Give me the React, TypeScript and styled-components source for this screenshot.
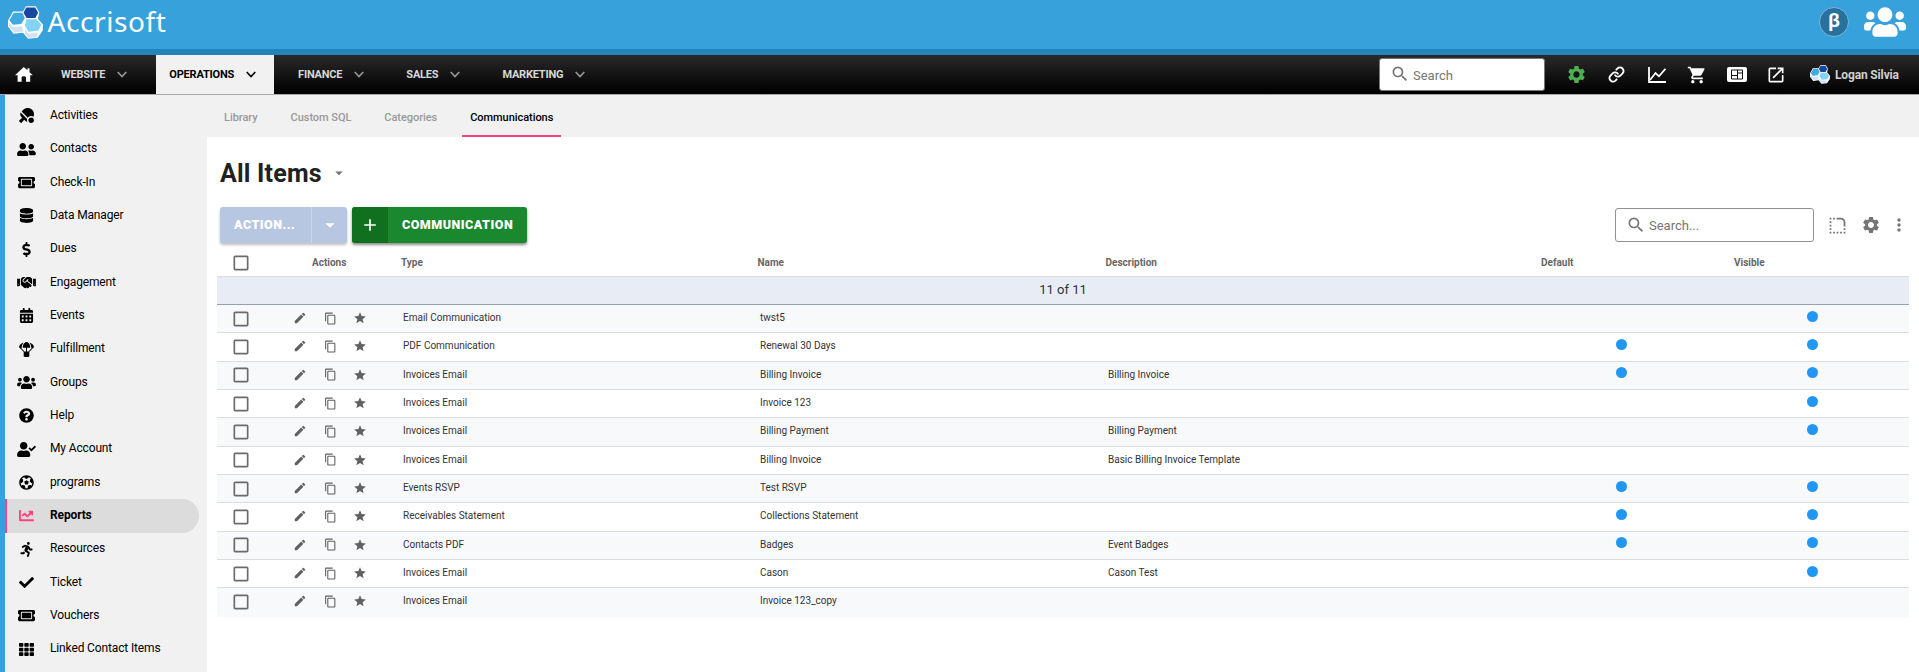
import React from "react";
import styled, { createGlobalStyle, css } from "styled-components";
import type { IconType } from "react-icons";
import {
  FaTableTennis, FaUserFriends, FaTicketAlt, FaDatabase, FaDollarSign, FaHandshake,
  FaCalendarAlt, FaParachuteBox, FaUsers, FaQuestionCircle, FaUserCheck, FaFutbol,
  FaChartLine, FaRunning, FaCheck, FaTh,
} from "react-icons/fa";
import {
  MdSearch, MdSettings, MdShoppingCart, MdOpenInNew, MdEdit, MdContentCopy, MdStar,
  MdCheckBoxOutlineBlank, MdMoreVert, MdRoundedCorner, MdArrowDropDown, MdAdd,
} from "react-icons/md";
import { Link as LinkIcon } from "lucide-react";

const Global = createGlobalStyle`
  * { box-sizing: border-box; }
  html, body { margin: 0; padding: 0; background: #fff; }
  body { font-family: Roboto, sans-serif; overflow: hidden; }
  svg { display: block; flex: none; }
`;

const Page = styled.div`
  display: flex;
  flex-direction: column;
  height: 672px;
  overflow: hidden;
`;

const Brand = styled.header`
  display: flex;
  justify-content: space-between;
  height: 55px;
  padding: 0 13px 0 8px;
  background: #37a1dc;
  border-bottom: 6px solid #2384bc;
`;

const Logo = styled.div`
  display: flex;
  align-items: flex-start;
  padding-top: 6px;
  color: #fff;
`;

const Wordmark = styled.span`
  margin: -3px 0 0 4.500px;
  font: 400 28px/36px "Noto Sans", sans-serif;
  letter-spacing: 0.6px;
`;

const BrandTools = styled.div`
  display: flex;
  align-items: center;
  gap: 15px;
  height: 44px;
  color: #fff;
`;

const Beta = styled.span`
  width: 30px;
  height: 30px;
  border: 1px solid #7fb4d4;
  border-radius: 50%;
  background: #26719d;
  font: 700 18px/25px "Open Sans", sans-serif;
  text-align: center;
`;

const PeopleIcon = styled(FaUsers)`
  width: 42px;
  height: 34px;
`;

const Nav = styled.nav`
  display: flex;
  align-items: center;
  height: 40px;
  border-bottom: 1px solid #a8a8a8;
  background: linear-gradient(#2a2a2a, #000 95%);
  color: #fff;
`;

const HomeLink = styled.a`
  display: flex;
  width: 48px;
  padding-left: 15px;
`;

const NavItem = styled.a<{ $active?: boolean }>`
  display: flex;
  align-items: center;
  align-self: stretch;
  gap: 12px;
  margin-right: 11px;
  padding: 0 18px 0 13px;
  color: ${(p) => (p.$active ? "#000" : "#d8d8d8")};
  background: ${(p) => (p.$active ? "#f1f1f1" : "transparent")};
  font-size: 11px;
  font-weight: 700;
  letter-spacing: -0.2px;
  svg { color: ${(p) => (p.$active ? "#000" : "#999")}; }
`;

const SearchField = styled.div<{ $table?: boolean }>`
  display: flex;
  flex: none;
  align-items: center;
  gap: 3px;
  width: ${(p) => (p.$table ? 199 : 166)}px;
  height: ${(p) => (p.$table ? 34 : 33)}px;
  padding: 1px 10px 0;
  border: 1px solid ${(p) => (p.$table ? "#919191" : "#777")};
  border-radius: 3px;
  background: #fff;
  color: #757575;
  font-size: 13px;
  svg { margin-top: -2px; }
`;

const NavTools = styled.div`
  display: flex;
  align-items: center;
  margin-left: auto;
`;

const ToolSlot = styled.span<{ $w: number; $color?: string }>`
  display: flex;
  flex: none;
  justify-content: center;
  width: ${(p) => p.$w}px;
  color: ${(p) => p.$color ?? "#fff"};
`;

const User = styled.span`
  display: flex;
  flex: none;
  align-items: center;
  gap: 5px;
  width: 109px;
  margin-left: 27px;
  color: #d0d0d0;
  font-size: 12px;
  font-weight: 700;
  letter-spacing: -0.15px;
  white-space: nowrap;
`;

const Body = styled.div`
  display: flex;
  flex: 1;
  min-height: 0;
`;

const Sidebar = styled.aside`
  width: 207px;
  padding-top: 4.3px;
  border-left: 5px solid #37a1dc;
  background: #f1f1f1;
`;

const SideItem = styled.a<{ $active?: boolean }>`
  display: flex;
  align-items: center;
  width: 194px;
  height: 33.33px;
  color: #000;
  font-size: 12px;
  letter-spacing: -0.14px;
  ${(p) => p.$active && css`
    border-radius: 0 17px 17px 0;
    background: #dcdcdc;
    box-shadow: inset 2px 0 #ff4081;
    font-weight: 700;
    svg { color: #ff4081; }
  `}
`;

const SideIcon = styled.span`
  display: flex;
  justify-content: center;
  width: 43px;
  margin-right: 2px;
  svg { width: 19px; height: 15px; }
`;

const SideLabel = styled.span`
  padding-bottom: 2px;
`;

const Main = styled.main`
  flex: 1;
  min-width: 0;
`;

const Tabs = styled.div`
  display: flex;
  height: 42px;
  padding-left: 9px;
  background: #f1f1f1;
`;

const Tab = styled.a<{ $active?: boolean }>`
  padding: 0 8px;
  margin-right: 17px;
  border-bottom: 2px solid ${(p) => (p.$active ? "#ff4081" : "transparent")};
  color: ${(p) => (p.$active ? "#000" : "#999")};
  font-size: 11px;
  font-weight: 500;
  letter-spacing: -0.05px;
  line-height: 45px;
`;

const Title = styled.h1`
  display: flex;
  align-items: center;
  gap: 8px;
  height: 70px;
  margin: 0;
  padding: 2px 0 0 13px;
  color: #212121;
  font-size: 25px;
  font-weight: 700;
  letter-spacing: 0.2px;
  svg { color: #757575; }
`;

const Toolbar = styled.div`
  display: flex;
  align-items: center;
  height: 36px;
  padding: 0 10px 0 13px;
`;

const Button = styled.button<{ $green?: boolean }>`
  display: flex;
  height: 36px;
  margin: 0 5px 0 0;
  padding: 0;
  overflow: hidden;
  border: 0;
  border-radius: 3px;
  background: ${(p) => (p.$green ? "#19882f" : "#b7c7e2")};
  box-shadow: 0 2px 3px rgba(0, 0, 0, ${(p) => (p.$green ? 0.45 : 0.25)});
  color: #fff;
  font: 900 12.5px/36px Roboto, sans-serif;
  letter-spacing: 0.5px;
`;

const ButtonIcon = styled.span<{ $side: "left" | "right" }>`
  display: flex;
  align-items: center;
  justify-content: center;
  width: 36px;
  background: ${(p) => (p.$side === "left" ? "#11701f" : "transparent")};
  border-left: ${(p) => (p.$side === "right" ? "1px solid #c8d5ea" : "0")};
`;

const ButtonText = styled.span<{ $w: number }>`
  width: ${(p) => p.$w}px;
  padding-left: 14px;
  text-align: left;
`;

const TableTools = styled.div`
  display: flex;
  align-items: center;
  margin-left: auto;
  color: #757575;
`;

const Grid = styled.div`
  margin: 0 10px;
`;

const columns = css`
  display: grid;
  grid-template-columns: 64px 118px 357px 348px 437px 193px 1fr;
  align-items: center;
`;

const HeadRow = styled.div`
  ${columns}
  height: 34px;
  border-bottom: 1px solid #dadada;
  color: #666;
  font-size: 10px;
  font-weight: 700;
  padding-top: 6px;
`;

const HeadCell = styled.span<{ $x: number }>`
  padding: 0 0 1px ${(p) => p.$x}px;
`;

const GroupRow = styled.div`
  height: 28px;
  border-bottom: 1px solid #9aa0a8;
  background: #e8edf5;
  color: #333;
  font-size: 13px;
  line-height: 25px;
  text-align: center;
`;

const Row = styled.div<{ $odd: boolean }>`
  ${columns}
  height: 28.33px;
  border-bottom: 1px solid #dcdcdc;
  background: ${(p) => (p.$odd ? "#f8f9fb" : "#fff")};
  color: #333;
  font-size: 10px;
  &:last-child { border-bottom-color: transparent; }
`;

const Check = styled(MdCheckBoxOutlineBlank)`
  margin-left: 14px;
  color: #6b6b6b;
`;

const Actions = styled.span`
  display: flex;
  align-items: center;
  gap: 16.500px;
  padding: 0 0 1px 12px;
  color: #616161;
`;

const Cell = styled.span`
  padding: 0 0 2px 4px;
`;

const DotCell = styled.span<{ $x: number }>`
  padding: 0 0 5px ${(p) => p.$x}px;
`;

const Dot = styled.i`
  display: block;
  width: 11px;
  height: 11px;
  border-radius: 50%;
  background: #2196f3;
`;

const Hexes = ({ width, height }: { width: number; height: number }) => (
  <svg width={width} height={height} viewBox="0 0 35 33">
    <path d="m0 14.500 5-9h10L18 .3h9.800L31.300 6.500l-1.300 6.500 5 5.500-.3 6L29.700 31.700 20 32.700l-5-6L5.500 27.700 0 20.500z" fill="#fff" />
    <path d="M5.700 6.800h8.600l2.500 5.200-3.600 6-8.400.8-3.400-4.500z" fill="#3fa9e2" />
    <path d="M18.300 1.500h8.900l2.900 5.200-2.800 5.300h-8.700L15.500 6.700z" fill="#17479e" />
    <path d="M18.500 13.300h9.800l5.200 5.200-3.300 6.200-9.700 1-3.700-6.200z" fill="#82d3f7" />
    <path d="m1 16.500 4 4.500 9-.8 1.500 5.300-9.500 1L1 20.300zM17 23l3.500 4.500 9-1L29 31l-8.600.9-3.400-4.400z" fill="#d3e2f3" />
  </svg>
);

const HomeIcon = () => (
  <svg width="18" height="15" viewBox="0 0 18 15" fill="currentColor">
    <path d="M8.800 0 12.500 3.300V1.200h2v4L17.800 8.200H15.200V14.700H11V10.500Q11 9.200 8.800 9.200T6.600 10.500V14.700H2.600V8.200H0z" />
  </svg>
);

const Chevron = () => (
  <svg width="10" height="7" viewBox="0 0 10 7" fill="none" stroke="currentColor" strokeWidth="1.600">
    <path d="m.7 1 4.300 4.500L9.300 1" />
  </svg>
);

const TrendIcon = () => (
  <svg width="18" height="16" viewBox="0 0 18 16" fill="none" stroke="currentColor" strokeWidth="1.800">
    <path d="M1 0v15h17M2 13l5.500-7 3.500 3.300 6.500-7.500" />
  </svg>
);

const BoardIcon = () => (
  <svg width="20" height="15" viewBox="0 0 20 15">
    <rect width="20" height="15" rx="2" fill="currentColor" />
    <path d="M4.500 3h11v9h-11zM10.500 3v9M4.500 8.500h6M10.500 6h5" fill="none" stroke="#111" />
  </svg>
);

const navItems = ["WEBSITE", "OPERATIONS", "FINANCE", "SALES", "MARKETING"];

const sideItems: [string, IconType][] = [
  ["Activities", FaTableTennis],
  ["Contacts", FaUserFriends],
  ["Check-In", FaTicketAlt],
  ["Data Manager", FaDatabase],
  ["Dues", FaDollarSign],
  ["Engagement", FaHandshake],
  ["Events", FaCalendarAlt],
  ["Fulfillment", FaParachuteBox],
  ["Groups", FaUsers],
  ["Help", FaQuestionCircle],
  ["My Account", FaUserCheck],
  ["programs", FaFutbol],
  ["Reports", FaChartLine],
  ["Resources", FaRunning],
  ["Ticket", FaCheck],
  ["Vouchers", FaTicketAlt],
  ["Linked Contact Items", FaTh],
];

const tabs = ["Library", "Custom SQL", "Categories", "Communications"];

type Item = [type: string, name: string, description: string, isDefault: boolean, visible: boolean];

const items: Item[] = [
  ["Email Communication", "twst5", "", false, true],
  ["PDF Communication", "Renewal 30 Days", "", true, true],
  ["Invoices Email", "Billing Invoice", "Billing Invoice", true, true],
  ["Invoices Email", "Invoice 123", "", false, true],
  ["Invoices Email", "Billing Payment", "Billing Payment", false, true],
  ["Invoices Email", "Billing Invoice", "Basic Billing Invoice Template", false, false],
  ["Events RSVP", "Test RSVP", "", true, true],
  ["Receivables Statement", "Collections Statement", "", true, true],
  ["Contacts PDF", "Badges", "Event Badges", true, true],
  ["Invoices Email", "Cason", "Cason Test", false, true],
  ["Invoices Email", "Invoice 123_copy", "", false, false],
];

export default function App() {
  return (
    <Page>
      <Global />
      <Brand>
        <Logo>
          <Hexes width={35} height={33} />
          <Wordmark>Accrisoft</Wordmark>
        </Logo>
        <BrandTools>
          <Beta>β</Beta>
          <PeopleIcon />
        </BrandTools>
      </Brand>
      <Nav>
        <HomeLink><HomeIcon /></HomeLink>
        {navItems.map((label) => (
          <NavItem key={label} $active={label === "OPERATIONS"}>
            {label}
            <Chevron />
          </NavItem>
        ))}
        <NavTools>
          <SearchField><MdSearch size={20} />Search</SearchField>
          <ToolSlot $w={62} $color="#4caf50"><MdSettings size={21} /></ToolSlot>
          <ToolSlot $w={19}><LinkIcon size={17} strokeWidth={2.6} /></ToolSlot>
          <ToolSlot $w={62}><TrendIcon /></ToolSlot>
          <ToolSlot $w={17}><MdShoppingCart size={20} /></ToolSlot>
          <ToolSlot $w={64}><BoardIcon /></ToolSlot>
          <ToolSlot $w={14}><MdOpenInNew size={20} /></ToolSlot>
          <User><Hexes width={20} height={19} />Logan Silvia</User>
        </NavTools>
      </Nav>
      <Body>
        <Sidebar>
          {sideItems.map(([label, Icon]) => (
            <SideItem key={label} $active={label === "Reports"}>
              <SideIcon><Icon /></SideIcon>
              <SideLabel>{label}</SideLabel>
            </SideItem>
          ))}
        </Sidebar>
        <Main>
          <Tabs>
            {tabs.map((label) => (
              <Tab key={label} $active={label === "Communications"}>{label}</Tab>
            ))}
          </Tabs>
          <Title>All Items<MdArrowDropDown size={18} /></Title>
          <Toolbar>
            <Button>
              <ButtonText $w={91}>ACTION...</ButtonText>
              <ButtonIcon $side="right"><MdArrowDropDown size={22} /></ButtonIcon>
            </Button>
            <Button $green>
              <ButtonIcon $side="left"><MdAdd size={20} /></ButtonIcon>
              <ButtonText $w={139}>COMMUNICATION</ButtonText>
            </Button>
            <TableTools>
              <SearchField $table><MdSearch size={20} />Search...</SearchField>
              <ToolSlot $w={47} $color="#757575"><MdRoundedCorner size={21} /></ToolSlot>
              <ToolSlot $w={20} $color="#757575"><MdSettings size={20} /></ToolSlot>
              <ToolSlot $w={8} />
              <ToolSlot $w={20} $color="#757575"><MdMoreVert size={20} /></ToolSlot>
            </TableTools>
          </Toolbar>
          <Grid>
            <HeadRow>
              <Check size={20} />
              <HeadCell $x={31}>Actions</HeadCell>
              <HeadCell $x={2}>Type</HeadCell>
              <HeadCell $x={1.5}>Name</HeadCell>
              <HeadCell $x={1.5}>Description</HeadCell>
              <HeadCell $x={0}>Default</HeadCell>
              <HeadCell $x={0}>Visible</HeadCell>
            </HeadRow>
            <GroupRow>11 of 11</GroupRow>
            {items.map(([type, name, description, isDefault, visible], i) => (
              <Row key={i} $odd={i % 2 === 0}>
                <Check size={20} />
                <Actions>
                  <MdEdit size={14} />
                  <MdContentCopy size={13} />
                  <MdStar size={14} />
                </Actions>
                <Cell>{type}</Cell>
                <Cell>{name}</Cell>
                <Cell>{description}</Cell>
                <DotCell $x={75}>{isDefault && <Dot />}</DotCell>
                <DotCell $x={73}>{visible && <Dot />}</DotCell>
              </Row>
            ))}
          </Grid>
        </Main>
      </Body>
    </Page>
  );
}
